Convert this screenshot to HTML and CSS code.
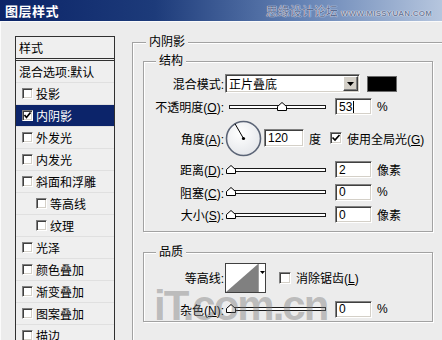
FILE: index.html
```html
<!DOCTYPE html>
<html lang="zh-CN">
<head>
  <meta charset="UTF-8" />
  <title>图层样式</title>
  <link rel="stylesheet" href="styles.css">
</head>
<body>
  <header class="titlebar">
    <h1>图层样式</h1>
    <span class="site">思缘设计论坛 <small>WWW.MISSYUAN.COM</small></span>
  </header>

  <div class="content">
    <ul class="style-list">
      <li class="list-head">样式</li>
      <li class="opt">混合选项:默认</li>
      <li><span class="check"></span>投影</li>
      <li class="selected"><span class="check"><svg viewBox="0 0 9 9"><polyline points="1.5,4 3.5,6.5 7.5,1.5" /></svg></span>内阴影</li>
      <li><span class="check"></span>外发光</li>
      <li><span class="check"></span>内发光</li>
      <li><span class="check"></span>斜面和浮雕</li>
      <li class="sub"><span class="check"></span>等高线</li>
      <li class="sub"><span class="check"></span>纹理</li>
      <li><span class="check"></span>光泽</li>
      <li><span class="check"></span>颜色叠加</li>
      <li><span class="check"></span>渐变叠加</li>
      <li><span class="check"></span>图案叠加</li>
      <li><span class="check"></span>描边</li>
    </ul>

    <section class="group outer">
      <div class="group-title">内阴影</div>

      <div class="group inner">
        <div class="group-title">结构</div>
        <div class="rows">
          <div class="row">
            <span class="label">混合模式:</span>
            <div class="select sunken">
              <span>正片叠底</span>
              <span class="drop-btn"><svg viewBox="0 0 7 4"><polygon points="0,0 7,0 3.5,4" /></svg></span>
            </div>
            <span class="swatch"></span>
          </div>
          <div class="row">
            <span class="label">不透明度(<u>O</u>):</span>
            <div class="slider"><div class="track"></div><svg class="thumb" style="left: 52px" viewBox="0 0 10 9"><polygon points="0.5,8.5 0.5,4.5 5,0.5 9.5,4.5 9.5,8.5" /></svg></div>
            <span class="field sunken">53<i class="caret"></i></span>
            <span class="unit">%</span>
          </div>
          <div class="row row-angle">
            <span class="label">角度(<u>A</u>):</span>
            <svg class="dial" viewBox="0 0 37 37">
              <defs>
                <radialGradient id="dialFill" cx="0.4" cy="0.35" r="0.7">
                  <stop offset="0" stop-color="#ffffff" />
                  <stop offset="1" stop-color="#e4e6ea" />
                </radialGradient>
              </defs>
              <circle cx="18.5" cy="18.5" r="17" fill="url(#dialFill)" stroke="#5b6476" stroke-width="1.6" />
              <line x1="18.5" y1="18.5" x2="10" y2="3.8" stroke="#000" stroke-width="1" />
              <circle cx="18.5" cy="18.5" r="1.6" fill="#000" />
            </svg>
            <span class="field field-angle sunken">120</span>
            <span class="unit">度</span>
            <span class="check field-check"><svg viewBox="0 0 10 10"><polyline points="1.5,4.5 4,7 8.5,2" /></svg></span>
            <span class="check-label">使用全局光(<u>G</u>)</span>
          </div>
          <div class="row">
            <span class="label">距离(<u>D</u>):</span>
            <div class="slider"><div class="track"></div><svg class="thumb" style="left: 1px" viewBox="0 0 10 9"><polygon points="0.5,8.5 0.5,4.5 5,0.5 9.5,4.5 9.5,8.5" /></svg></div>
            <span class="field sunken">2</span>
            <span class="unit">像素</span>
          </div>
          <div class="row row-short">
            <span class="label">阻塞(<u>C</u>):</span>
            <div class="slider"><div class="track"></div><svg class="thumb" style="left: 1px" viewBox="0 0 10 9"><polygon points="0.5,8.5 0.5,4.5 5,0.5 9.5,4.5 9.5,8.5" /></svg></div>
            <span class="field sunken">0</span>
            <span class="unit">%</span>
          </div>
          <div class="row">
            <span class="label">大小(<u>S</u>):</span>
            <div class="slider"><div class="track"></div><svg class="thumb" style="left: 1px" viewBox="0 0 10 9"><polygon points="0.5,8.5 0.5,4.5 5,0.5 9.5,4.5 9.5,8.5" /></svg></div>
            <span class="field sunken">0</span>
            <span class="unit">像素</span>
          </div>
        </div>
      </div>

      <div class="group inner quality">
        <div class="group-title">品质</div>
        <div class="rows">
          <div class="row row-contour">
            <span class="label">等高线:</span>
            <svg class="contour" viewBox="0 0 41 30">
              <rect x="0.5" y="0.5" width="40" height="29" fill="#fff" stroke="#404040" />
              <polygon points="1,29 33,1 33,29" fill="#808080" />
              <line x1="33.5" y1="1" x2="33.5" y2="29" stroke="#a0a0a0" />
              <polygon points="35,8 40,8 37.5,11" fill="#000" />
            </svg>
            <span class="check field-check aa"></span>
            <span class="check-label">消除锯齿(<u>L</u>)</span>
          </div>
          <div class="row row-noise">
            <span class="label">杂色(<u>N</u>):</span>
            <div class="slider"><div class="track"></div><svg class="thumb" style="left: 1px" viewBox="0 0 10 9"><polygon points="0.5,8.5 0.5,4.5 5,0.5 9.5,4.5 9.5,8.5" /></svg></div>
            <span class="field sunken">0</span>
            <span class="unit">%</span>
          </div>
        </div>
      </div>
    </section>
  </div>

  <div class="watermark">iT.com.cn</div>
</body>
</html>
```

FILE: styles.css
```css
body {
  margin: 0;
  width: 442px;
  height: 340px;
  overflow: hidden;
  position: relative;
  background: #ececec;
  font-family: "Liberation Sans", "Noto Sans CJK SC", sans-serif;
  font-size: 12px;
  color: #000;
}
.titlebar {
  height: 22px;
  box-sizing: border-box;
  display: flex;
  align-items: center;
  justify-content: space-between;
  padding: 0 10px 0 5px;
  background: linear-gradient(90deg, #0b2468 0%, #1d3b7a 35%, #6482b4 68%, #b6c6de 100%);
  border-bottom: 1px solid #fafafa;
}
.titlebar h1 {
  margin: 0;
  font-size: 13px;
  font-weight: bold;
  color: #fff;
  letter-spacing: 0.5px;
}
.site {
  font-size: 12px;
  color: #5d6d92;
  text-shadow: 0 0 1px #fff, 0 0 1px #fff;
  white-space: nowrap;
}
.site small {
  font-size: 8px;
  font-weight: bold;
  letter-spacing: 0.2px;
  color: #6e7c9a;
}
.content {
  display: flex;
  align-items: flex-start;
  padding: 14px 0 0 14px;
  border-left: 1px solid #fbfbfb;
}

/* left list */
.style-list {
  list-style: none;
  margin: 0;
  padding: 0;
  width: 100px;
  height: 320px;
  flex-shrink: 0;
  box-sizing: border-box;
  border: 1px solid #303030;
  border-bottom: none;
  background: #efefef;
}
.style-list li {
  height: 22px;
  box-sizing: border-box;
  display: flex;
  align-items: center;
  padding-left: 6px;
  border-bottom: 1px solid #e0e0e0;
  white-space: nowrap;
}
.style-list .list-head {
  height: 24px;
  padding-left: 3px;
  border-bottom: 3px double #303030;
}
.style-list .opt {
  padding-left: 3px;
}
.style-list .sub {
  padding-left: 20px;
}
.style-list .selected {
  background: #0c246a;
  color: #fff;
}
.style-list .check {
  margin-right: 3px;
}

/* checkbox & sunken fields */
.sunken, .check {
  box-sizing: border-box;
  background: #fff;
  border: 1px solid;
  border-color: #808080 #fff #fff #808080;
  box-shadow: inset 1px 1px 0 #404040, inset -1px -1px 0 #d4d0c8;
}
.check {
  display: inline-block;
  width: 11px;
  height: 11px;
  flex-shrink: 0;
  position: relative;
}
.check svg {
  position: absolute;
  left: 0;
  top: 0;
  width: 9px;
  height: 9px;
}
.check polyline {
  fill: none;
  stroke: #000;
  stroke-width: 1.7;
}

/* group boxes */
.group {
  border: 1px solid #a2a2a2;
  box-shadow: inset 1px 1px 0 #fff, 1px 1px 0 #fff;
}
.outer {
  margin: 6px 0 0 17px;
  width: 322px;
  height: 300px;
  flex-shrink: 0;
  border-right: none;
  border-bottom: none;
}
.group-title {
  display: table;
  margin: -8px 0 0 13px;
  padding: 0 3px;
  line-height: 14px;
  background: #ececec;
}
.inner {
  margin: 12px 0 0 10px;
  width: 290px;
  box-sizing: border-box;
}
.inner .group-title {
  margin-left: 12px;
}
.rows {
  padding: 4px 0 5px;
}
.quality {
  margin-top: 20px;
}
.quality .rows {
  padding: 3px 0 1px;
}

.row {
  display: flex;
  align-items: center;
  height: 23px;
}
.row-angle {
  height: 40px;
}
.row-short {
  height: 22px;
}
.row-contour {
  height: 31px;
}
.row-noise {
  margin-top: 5px;
  height: 22px;
}
.label {
  width: 80px;
  margin-right: 1px;
  text-align: right;
  flex-shrink: 0;
  white-space: nowrap;
}

.select {
  width: 135px;
  height: 19px;
  display: flex;
  align-items: center;
  justify-content: space-between;
  padding: 0 1px 0 3px;
}
.drop-btn {
  width: 15px;
  height: 15px;
  box-sizing: border-box;
  display: flex;
  align-items: center;
  justify-content: center;
  background: #d4d0c8;
  border: 1px solid;
  border-color: #fff #404040 #404040 #fff;
  box-shadow: inset -1px -1px 0 #808080;
}
.drop-btn svg {
  width: 7px;
  height: 4px;
  fill: #000;
}
.swatch {
  width: 30px;
  height: 16px;
  margin-left: 7px;
  box-sizing: border-box;
  background: #000;
  border: 1px solid #6a6a6a;
}

.slider {
  position: relative;
  width: 101px;
  height: 10px;
  flex-shrink: 0;
}
.track {
  margin: 3px 0 0 4px;
  width: 97px;
  height: 4px;
  box-sizing: border-box;
  background: #fff;
  border: 1px solid #1a1a1a;
}
.thumb {
  position: absolute;
  top: 0;
  width: 10px;
  height: 9px;
  fill: #fff;
  stroke: #000;
  stroke-width: 1;
}

.field {
  width: 37px;
  height: 17px;
  margin-left: 9px;
  padding-left: 3px;
  display: flex;
  align-items: center;
  flex-shrink: 0;
}
.caret {
  width: 1px;
  height: 12px;
  margin-left: 1px;
  background: #000;
}
.unit {
  margin-left: 5px;
  white-space: nowrap;
}
.field-angle {
  width: 40px;
  height: 18px;
  margin-left: 2px;
}
.dial {
  width: 37px;
  height: 37px;
  flex-shrink: 0;
}
.field-check {
  width: 12px;
  height: 12px;
  margin-left: 9px;
}
.field-check svg {
  width: 10px;
  height: 10px;
}
.check-label {
  margin-left: 5px;
  white-space: nowrap;
}
.contour {
  width: 41px;
  height: 30px;
  flex-shrink: 0;
}
.aa {
  margin-left: 13px;
}

/* site watermark laid over the dialog */
.watermark {
  position: absolute;
  left: 154px;
  top: 285px;
  font-family: "Liberation Sans", sans-serif;
  font-weight: bold;
  font-size: 42px;
  line-height: 42px;
  letter-spacing: -2px;
  color: rgba(120, 120, 120, 0.42);
  pointer-events: none;
}
```
